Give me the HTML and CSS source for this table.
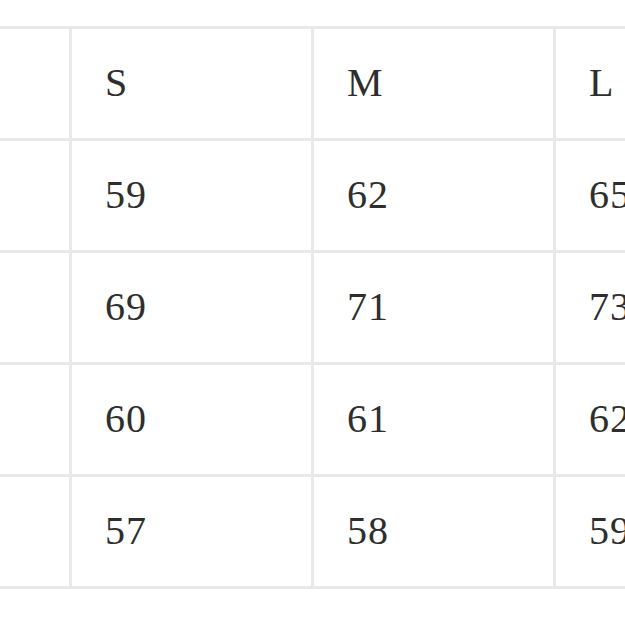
FILE: index.html
```html
<!DOCTYPE html>
<html lang="ko">
<head>
<meta charset="utf-8">
<title>Size table</title>
<link rel="stylesheet" href="styles.css">
</head>
<body>
<div class="page">
  <div class="size-table">
    <div class="cell label"></div><div class="cell">S</div><div class="cell">M</div><div class="cell">L</div>
    <div class="cell label"></div><div class="cell">59</div><div class="cell">62</div><div class="cell">65</div>
    <div class="cell label"></div><div class="cell">69</div><div class="cell">71</div><div class="cell">73</div>
    <div class="cell label"></div><div class="cell">60</div><div class="cell">61</div><div class="cell">62</div>
    <div class="cell label"></div><div class="cell">57</div><div class="cell">58</div><div class="cell">59</div>
  </div>
</div>
</body>
</html>
```
FILE: styles.css
```css
html, body {
  margin: 0;
  padding: 0;
  background: #ffffff;
  overflow: hidden;
}
.page {
  width: 625px;
  height: 625px;
  overflow: hidden;
  padding-top: 26px;
  box-sizing: border-box;
}
.size-table {
  display: grid;
  grid-template-columns: 69px 239px 239px 239px;
  grid-auto-rows: 109px;
  gap: 3px;
  padding: 3px 0;
  width: 795px;
  background: #e9e9e9;
}
.cell {
  background: #ffffff;
  display: flex;
  align-items: center;
  padding-left: 33px;
  padding-bottom: 2px;
  box-sizing: border-box;
  font-family: "Liberation Serif", "Times New Roman", serif;
  font-size: 40px;
  letter-spacing: 1px;
  color: #2e2e2e;
}
.cell.label {
  padding-left: 0;
}
```
